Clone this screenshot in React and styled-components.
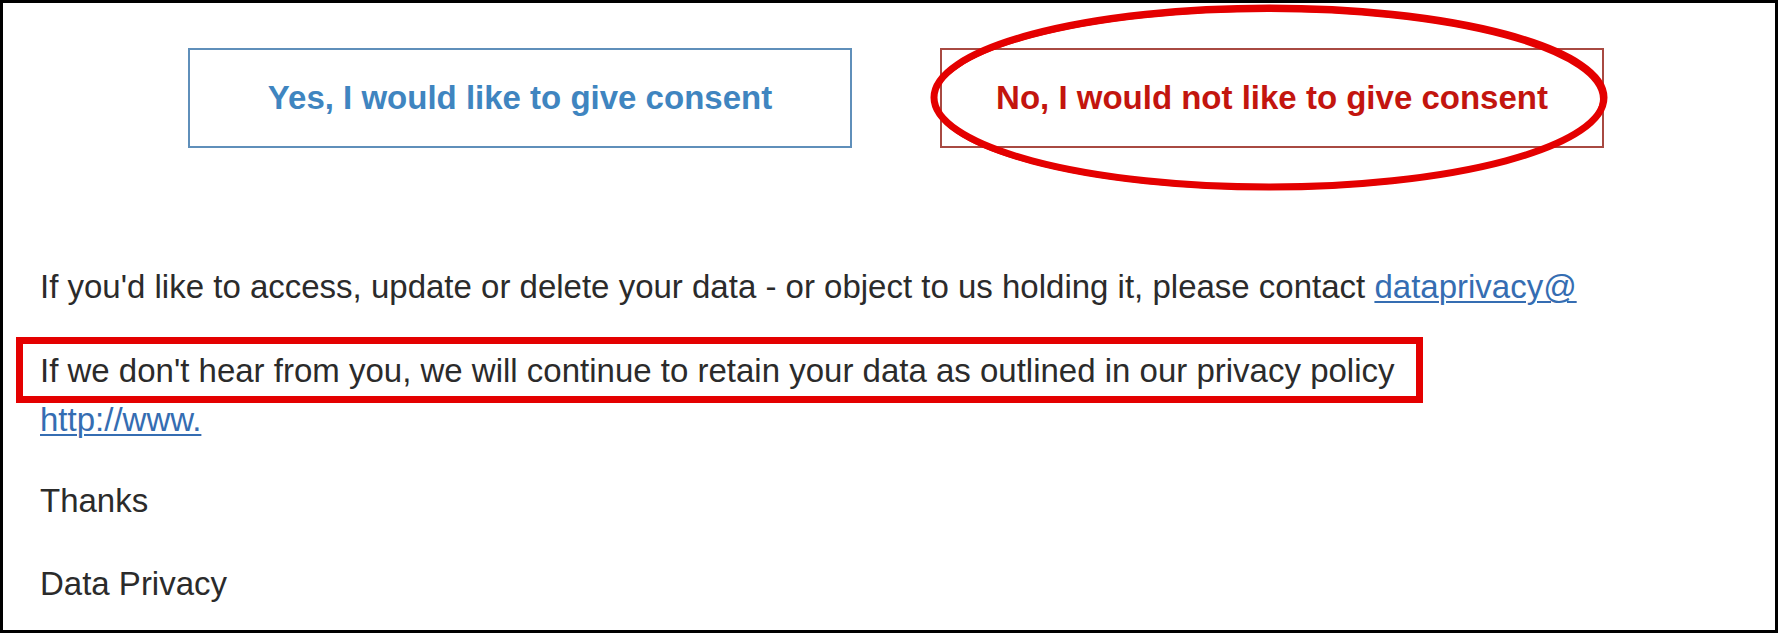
import React from 'react';
import styled, { createGlobalStyle } from 'styled-components';

const GlobalStyle = createGlobalStyle`
  html, body {
    margin: 0;
    padding: 0;
    background: #fff;
  }

  body {
    font-family: 'Liberation Sans', Arial, sans-serif;
  }

  * {
    box-sizing: border-box;
  }
`;

const Frame = styled.div`
  height: 100vh;
  border: 3px solid #000;
  background: #fff;
  padding: 45px 0 0 37px;
  overflow: hidden;
`;

const ButtonRow = styled.div`
  display: flex;
  gap: 88px;
  padding-left: 148px;
`;

const ConsentButton = styled.div`
  position: relative;
  display: flex;
  align-items: center;
  justify-content: center;
  width: 664px;
  height: 100px;
  border: 2px solid ${(p) => (p.$decline ? '#a84a42' : '#5f8fba')};
  color: ${(p) => (p.$decline ? '#c3150e' : '#3f85c0')};
  font-size: 33px;
  font-weight: 700;
  white-space: nowrap;
`;

const Ellipse = styled.svg`
  position: absolute;
  left: -14px;
  top: -48px;
  width: 690px;
  height: 190px;
  pointer-events: none;
  overflow: visible;
`;

const Line = styled.p`
  position: relative;
  width: fit-content;
  margin: ${(p) => p.$top}px 0 0;
  font-size: 33px;
  line-height: 40px;
  color: #2b2b2b;
  white-space: nowrap;

  ${(p) =>
    p.$boxed &&
    `
    &::after {
      content: '';
      position: absolute;
      top: -14px;
      bottom: -12px;
      left: -24px;
      right: -28px;
      border: 7px solid #e40000;
    }
  `}
`;

const Link = styled.a`
  color: #356db2;
  text-decoration: underline;
  text-decoration-thickness: 2px;
  text-underline-offset: 3px;
`;

export default function App() {
  return (
    <>
      <GlobalStyle />
      <Frame>
        <ButtonRow>
          <ConsentButton>Yes, I would like to give consent</ConsentButton>
          <ConsentButton $decline>
            No, I would not like to give consent
            <Ellipse viewBox="0 0 690 190">
              <ellipse
                cx="341"
                cy="95.5"
                rx="335"
                ry="89.5"
                fill="none"
                stroke="#e40000"
                strokeWidth="7"
              />
              <ellipse
                cx="340"
                cy="97"
                rx="334"
                ry="89"
                fill="none"
                stroke="#e40000"
                strokeWidth="4"
              />
            </Ellipse>
          </ConsentButton>
        </ButtonRow>

        <Line $top={119}>
          If you'd like to access, update or delete your data - or object to us
          holding it, please contact <Link>dataprivacy@</Link>
        </Line>
        <Line $top={44} $boxed>
          If we don't hear from you, we will continue to retain your data as
          outlined in our privacy policy
        </Line>
        <Line $top={9}>
          <Link>http://www.</Link>
        </Line>
        <Line $top={41}>Thanks</Line>
        <Line $top={43}>Data Privacy</Line>
      </Frame>
    </>
  );
}
